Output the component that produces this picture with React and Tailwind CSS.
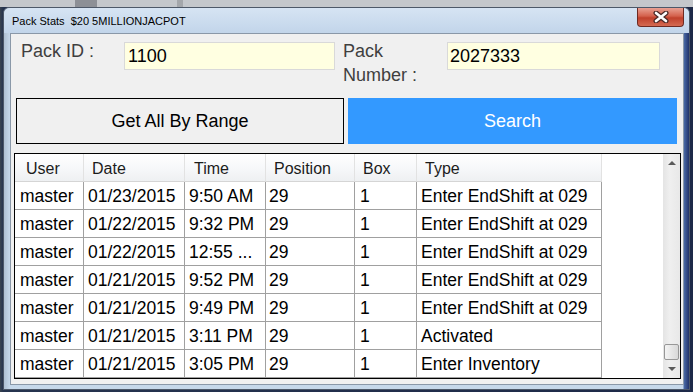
const columns = [
  { name: "User", w: "w-[69px]", hp: "pl-[11px]", dp: "pl-[5px]" },
  { name: "Date", w: "w-[101px]", hp: "pl-[8px]", dp: "pl-[4px]" },
  { name: "Time", w: "w-[81px]", hp: "pl-[9px]", dp: "pl-[4px]" },
  { name: "Position", w: "w-[89px]", hp: "pl-[8px]", dp: "pl-[3px]" },
  { name: "Box", w: "w-[62px]", hp: "pl-[8px]", dp: "pl-[5px]" },
  { name: "Type", w: "w-[185px]", hp: "pl-[8px]", dp: "pl-[4px]" },
];

const rows = [
  ["master", "01/23/2015", "9:50 AM", "29", "1", "Enter EndShift at 029"],
  ["master", "01/22/2015", "9:32 PM", "29", "1", "Enter EndShift at 029"],
  ["master", "01/22/2015", "12:55 ...", "29", "1", "Enter EndShift at 029"],
  ["master", "01/21/2015", "9:52 PM", "29", "1", "Enter EndShift at 029"],
  ["master", "01/21/2015", "9:49 PM", "29", "1", "Enter EndShift at 029"],
  ["master", "01/21/2015", "3:11 PM", "29", "1", "Activated"],
  ["master", "01/21/2015", "3:05 PM", "29", "1", "Enter Inventory"],
];

const CloseGlyph = () => (
  <svg width="16" height="12" viewBox="0 0 16 12">
    <path d="M3 2 L13 10 M13 2 L3 10" stroke="#4a2a28" strokeWidth="5" strokeLinecap="round" />
    <path d="M3 2 L13 10 M13 2 L3 10" stroke="#ffffff" strokeWidth="2.6" strokeLinecap="round" />
  </svg>
);

const App = () => {
  return (
    <div className="w-[693px] h-[392px] overflow-hidden bg-[linear-gradient(to_right,#3a4450_0px,#26344f_3px,#1d2948_100%)] font-['Liberation_Sans',Arial,sans-serif]">
      {/* desktop strip behind the window */}
      <div className="h-[7px] flex bg-[#c4c7cb]">
        <div className="ml-[75px] w-[22px] bg-[#8d9096]" />
        <div className="ml-[80px] w-[6px] bg-[#a4a7ab]" />
      </div>

      <div className="ml-[3px] w-[687px] h-[383px] rounded-t-[6px] border border-[#4d5868] flex flex-col bg-[#c3d5e8]">
        {/* title bar */}
        <div className="h-[25px] flex items-start justify-between pl-[8px] pr-[5px] rounded-t-[6px] bg-[linear-gradient(to_bottom,#d6e4f3,#c2d5ea)]">
          <div className="mt-[6px] text-[11px] leading-[14px] text-black whitespace-pre">
            Pack Stats  $20 5MILLIONJACPOT
          </div>
          <div className="w-[47px] h-[19px] rounded-b-[4px] border border-t-0 border-[#6e2a22] flex items-center justify-center bg-[linear-gradient(to_bottom,#e9a193,#d4604c_45%,#c0402c_55%,#d46a52)]">
            <CloseGlyph />
          </div>
        </div>

        {/* frame body */}
        <div className="flex-1 pl-[6px] pr-[5px] pb-[4px] bg-[linear-gradient(to_right,#aebfd1_0px,#c6d8ea_6px,#c6d8ea_calc(100%-6px),#4a6aa6_calc(100%-5px),#22336a_100%)]">
          <div className="h-full border border-[#8a98a8] bg-[#f0f0f0] flex flex-col">
            {/* inputs */}
            <div className="flex items-start pl-[10px] pt-[5px]">
              <div className="w-[103px] text-[18px] leading-[24px] text-[#3f3f3f]">Pack ID :</div>
              <div className="mt-[3px] w-[211px] h-[28px] border border-[#d9d9d9] bg-[#ffffe1] pl-[3px] text-[18px] leading-[27px] text-black">
                1100
              </div>
              <div className="ml-[8px] w-[104px] text-[18px] leading-[24px] text-[#3f3f3f]">
                Pack
                <br />
                Number :
              </div>
              <div className="mt-[3px] w-[213px] h-[28px] border border-[#d9d9d9] bg-[#ffffe1] pl-[2px] text-[18px] leading-[27px] text-black">
                2027333
              </div>
            </div>

            {/* buttons */}
            <div className="flex mt-[11px] ml-[5px] gap-[4px]">
              <div className="w-[328px] h-[46px] border border-black bg-[#f0f0f0] flex items-center justify-center text-[18px] text-black">
                Get All By Range
              </div>
              <div className="w-[329px] h-[46px] bg-[#3399ff] flex items-center justify-center text-[18px] text-white">
                Search
              </div>
            </div>

            {/* grid */}
            <div className="mt-[9px] ml-[3px] w-[667px] h-[226px] border border-black bg-white flex">
              <div className="flex-1 flex flex-col">
                <div className="flex h-[28px]">
                  {columns.map((c) => (
                    <div
                      key={c.name}
                      className={`${c.w} ${c.hp} h-[28px] pt-[5px] border-r border-b border-r-[#e2e2e2] border-b-[#d5d5d5] bg-[linear-gradient(to_bottom,#ffffff,#f7f8fa_50%,#eef0f2)] text-[16px] leading-[20px] text-[#1c1c1c]`}
                    >
                      {c.name}
                    </div>
                  ))}
                </div>
                {rows.map((r, i) => (
                  <div key={i} className="flex h-[28px]">
                    {r.map((v, j) => (
                      <div
                        key={j}
                        className={`${columns[j].w} ${columns[j].dp} h-[28px] pt-[3px] border-r border-b border-[#a0a0a0] text-[17.5px] leading-[22px] text-black whitespace-nowrap overflow-hidden`}
                      >
                        {v}
                      </div>
                    ))}
                  </div>
                ))}
              </div>

              {/* scrollbar */}
              <div className="w-[17px] flex flex-col items-center bg-[linear-gradient(to_right,#e4e4e4,#efefef_40%,#e8e8e8)]">
                <div className="h-[17px] flex items-center justify-center">
                  <div className="w-0 h-0 border-l-[4px] border-r-[4px] border-b-[4px] border-l-transparent border-r-transparent border-b-[#5a5a5a]" />
                </div>
                <div className="flex-1" />
                <div className="w-[15px] h-[16px] mr-[1px] rounded-[2px] border border-[#979797] bg-[linear-gradient(to_right,#f4f4f4,#e6e6e6_50%,#d8d8d8)]" />
                <div className="h-[18px] flex items-center justify-center">
                  <div className="w-0 h-0 border-l-[4px] border-r-[4px] border-t-[4px] border-l-transparent border-r-transparent border-t-[#5a5a5a]" />
                </div>
              </div>
            </div>
          </div>
        </div>
      </div>
    </div>
  );
};

export default App;
